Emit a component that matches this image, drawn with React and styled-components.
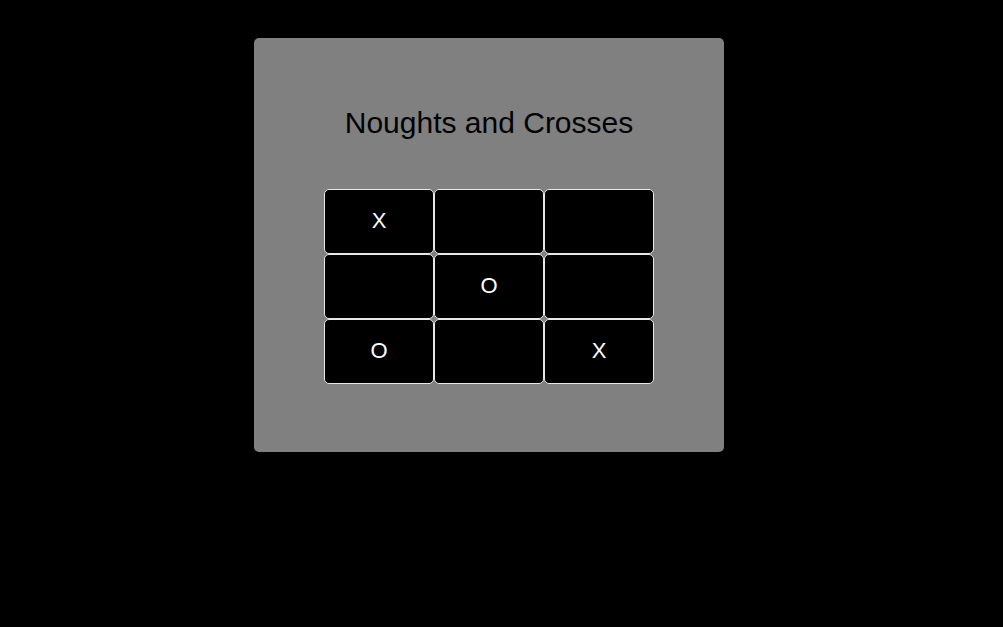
import React from 'react'
import styled, { createGlobalStyle } from 'styled-components'

const GlobalStyle = createGlobalStyle`
    html, body {
        margin: 0;
        padding: 0;
        background: #000;
    }
    body {
        font-family: 'Liberation Sans', Arial, sans-serif;
    }
`

const Page = styled.div`
    min-height: 627px;
    padding: 38px 0 0 254px;
    box-sizing: border-box;
`

const Card = styled.div`
    width: 470px;
    height: 414px;
    box-sizing: border-box;
    padding-top: 67px;
    background: #808080;
    border-radius: 5px;
    display: flex;
    flex-direction: column;
    align-items: center;
`

const Title = styled.h1`
    margin: 0;
    font-size: 30px;
    line-height: 35px;
    font-weight: normal;
    color: #000;
`

const Board = styled.div`
    margin-top: 49px;
    display: grid;
    grid-template-columns: repeat(3, 110px);
    grid-template-rows: repeat(3, 65px);
`

const Cell = styled.button`
    box-sizing: border-box;
    margin: 0;
    padding: 0 0 2px;
    background: #000;
    border: 1px solid #e8e8e8;
    border-radius: 5px;
    color: #fff;
    font-family: 'Liberation Sans', Arial, sans-serif;
    font-size: 22px;
    display: flex;
    align-items: center;
    justify-content: center;
    cursor: pointer;
`

const board = ['X', '', '', '', 'O', '', 'O', '', 'X']

function App() {
    return (
        <Page>
            <GlobalStyle />
            <Card>
                <Title>Noughts and Crosses</Title>
                <Board>
                    {board.map((value, i) => (
                        <Cell key={i}>{value}</Cell>
                    ))}
                </Board>
            </Card>
        </Page>
    )
}

export default App
